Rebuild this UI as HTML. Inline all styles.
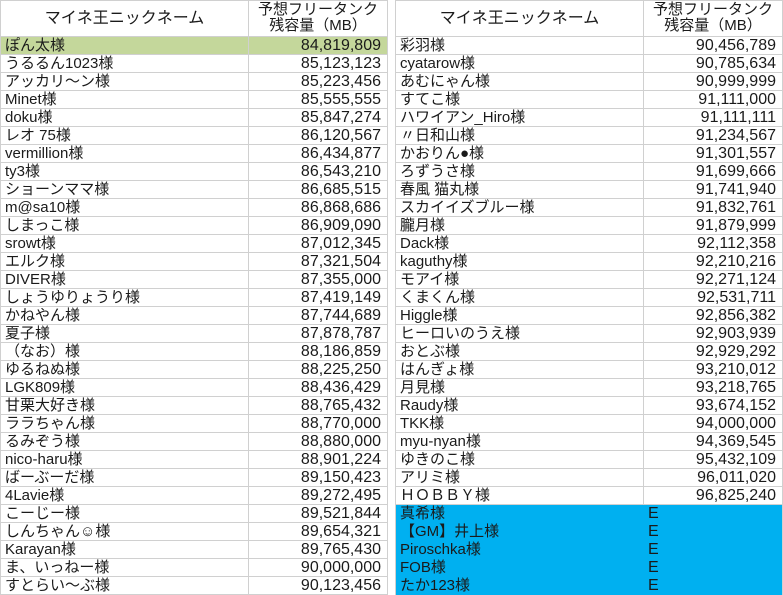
<!DOCTYPE html>
<html><head><meta charset="utf-8"><style>
*{margin:0;padding:0;box-sizing:border-box}
html,body{width:783px;height:595px;overflow:hidden}
body{background:#fff;position:relative;font-family:"Liberation Sans","Noto Sans CJK JP",sans-serif;color:#1a1a1a}
.t{position:absolute;top:0;width:388px;height:595px;border-left:1px solid #d0d0d0;border-right:1px solid #d0d0d0;display:grid;grid-template-rows:37px repeat(30,minmax(0,1fr));overflow:hidden}
.r{display:flex;min-height:0;overflow:hidden;border-bottom:1px solid #d0d0d0;font-size:15px;line-height:17px}
.r div{overflow:hidden;white-space:nowrap}
.a{width:248px;border-right:1px solid #d0d0d0;padding-left:4px}
.c{flex:1;text-align:right;padding-right:6px;font-size:16px}
.h{border-top:1px solid #d0d0d0}
.h .a{text-align:center;font-size:16px;line-height:35px;padding:0}
.h .c{text-align:center;font-size:15px;line-height:16px;padding:1px 0 0}
.g{background:#c4d79b}
.b{background:#00b0f0;border-bottom-color:#00b0f0}
.b .a{border-right-color:#00b0f0}
.b .c{text-align:left;padding-left:4px}
</style></head><body>
<div class="t" style="left:0">
<div class="r h"><div class="a">マイネ王ニックネーム</div><div class="c">予想フリータンク<br>残容量（MB）</div></div>
<div class="r g"><div class="a">ぽん太様</div><div class="c">84,819,809</div></div>
<div class="r"><div class="a">うるるん1023様</div><div class="c">85,123,123</div></div>
<div class="r"><div class="a">アッカリ〜ン様</div><div class="c">85,223,456</div></div>
<div class="r"><div class="a">Minet様</div><div class="c">85,555,555</div></div>
<div class="r"><div class="a">doku様</div><div class="c">85,847,274</div></div>
<div class="r"><div class="a">レオ 75様</div><div class="c">86,120,567</div></div>
<div class="r"><div class="a">vermillion様</div><div class="c">86,434,877</div></div>
<div class="r"><div class="a">ty3様</div><div class="c">86,543,210</div></div>
<div class="r"><div class="a">ショーンママ様</div><div class="c">86,685,515</div></div>
<div class="r"><div class="a">m@sa10様</div><div class="c">86,868,686</div></div>
<div class="r"><div class="a">しまっこ様</div><div class="c">86,909,090</div></div>
<div class="r"><div class="a">srowt様</div><div class="c">87,012,345</div></div>
<div class="r"><div class="a">エルク様</div><div class="c">87,321,504</div></div>
<div class="r"><div class="a">DIVER様</div><div class="c">87,355,000</div></div>
<div class="r"><div class="a">しょうゆりょうり様</div><div class="c">87,419,149</div></div>
<div class="r"><div class="a">かねやん様</div><div class="c">87,744,689</div></div>
<div class="r"><div class="a">夏子様</div><div class="c">87,878,787</div></div>
<div class="r"><div class="a">（なお）様</div><div class="c">88,186,859</div></div>
<div class="r"><div class="a">ゆるねぬ様</div><div class="c">88,225,250</div></div>
<div class="r"><div class="a">LGK809様</div><div class="c">88,436,429</div></div>
<div class="r"><div class="a">甘栗大好き様</div><div class="c">88,765,432</div></div>
<div class="r"><div class="a">ララちゃん様</div><div class="c">88,770,000</div></div>
<div class="r"><div class="a">るみぞう様</div><div class="c">88,880,000</div></div>
<div class="r"><div class="a">nico-haru様</div><div class="c">88,901,224</div></div>
<div class="r"><div class="a">ばーぶーだ様</div><div class="c">89,150,423</div></div>
<div class="r"><div class="a">4Lavie様</div><div class="c">89,272,495</div></div>
<div class="r"><div class="a">こーじー様</div><div class="c">89,521,844</div></div>
<div class="r"><div class="a">しんちゃん☺様</div><div class="c">89,654,321</div></div>
<div class="r"><div class="a">Karayan様</div><div class="c">89,765,430</div></div>
<div class="r"><div class="a">ま、いっねー様</div><div class="c">90,000,000</div></div>
<div class="r"><div class="a">すとらい〜ぶ様</div><div class="c">90,123,456</div></div>
</div>
<div class="t" style="left:395px">
<div class="r h"><div class="a">マイネ王ニックネーム</div><div class="c">予想フリータンク<br>残容量（MB）</div></div>
<div class="r"><div class="a">彩羽様</div><div class="c">90,456,789</div></div>
<div class="r"><div class="a">cyatarow様</div><div class="c">90,785,634</div></div>
<div class="r"><div class="a">あむにゃん様</div><div class="c">90,999,999</div></div>
<div class="r"><div class="a">すてこ様</div><div class="c">91,111,000</div></div>
<div class="r"><div class="a">ハワイアン_Hiro様</div><div class="c">91,111,111</div></div>
<div class="r"><div class="a">〃日和山様</div><div class="c">91,234,567</div></div>
<div class="r"><div class="a">かおりん●様</div><div class="c">91,301,557</div></div>
<div class="r"><div class="a">ろずうさ様</div><div class="c">91,699,666</div></div>
<div class="r"><div class="a">春風 猫丸様</div><div class="c">91,741,940</div></div>
<div class="r"><div class="a">スカイイズブルー様</div><div class="c">91,832,761</div></div>
<div class="r"><div class="a">朧月様</div><div class="c">91,879,999</div></div>
<div class="r"><div class="a">Dack様</div><div class="c">92,112,358</div></div>
<div class="r"><div class="a">kaguthy様</div><div class="c">92,210,216</div></div>
<div class="r"><div class="a">モアイ様</div><div class="c">92,271,124</div></div>
<div class="r"><div class="a">くまくん様</div><div class="c">92,531,711</div></div>
<div class="r"><div class="a">Higgle様</div><div class="c">92,856,382</div></div>
<div class="r"><div class="a">ヒーロいのうえ様</div><div class="c">92,903,939</div></div>
<div class="r"><div class="a">おとぶ様</div><div class="c">92,929,292</div></div>
<div class="r"><div class="a">はんぎょ様</div><div class="c">93,210,012</div></div>
<div class="r"><div class="a">月見様</div><div class="c">93,218,765</div></div>
<div class="r"><div class="a">Raudy様</div><div class="c">93,674,152</div></div>
<div class="r"><div class="a">TKK様</div><div class="c">94,000,000</div></div>
<div class="r"><div class="a">myu-nyan様</div><div class="c">94,369,545</div></div>
<div class="r"><div class="a">ゆきのこ様</div><div class="c">95,432,109</div></div>
<div class="r"><div class="a">アリミ様</div><div class="c">96,011,020</div></div>
<div class="r"><div class="a">ＨＯＢＢＹ様</div><div class="c">96,825,240</div></div>
<div class="r b"><div class="a">真希様</div><div class="c">E</div></div>
<div class="r b"><div class="a">【GM】井上様</div><div class="c">E</div></div>
<div class="r b"><div class="a">Piroschka様</div><div class="c">E</div></div>
<div class="r b"><div class="a">FOB様</div><div class="c">E</div></div>
<div class="r b"><div class="a">たか123様</div><div class="c">E</div></div>
</div>
</body></html>
